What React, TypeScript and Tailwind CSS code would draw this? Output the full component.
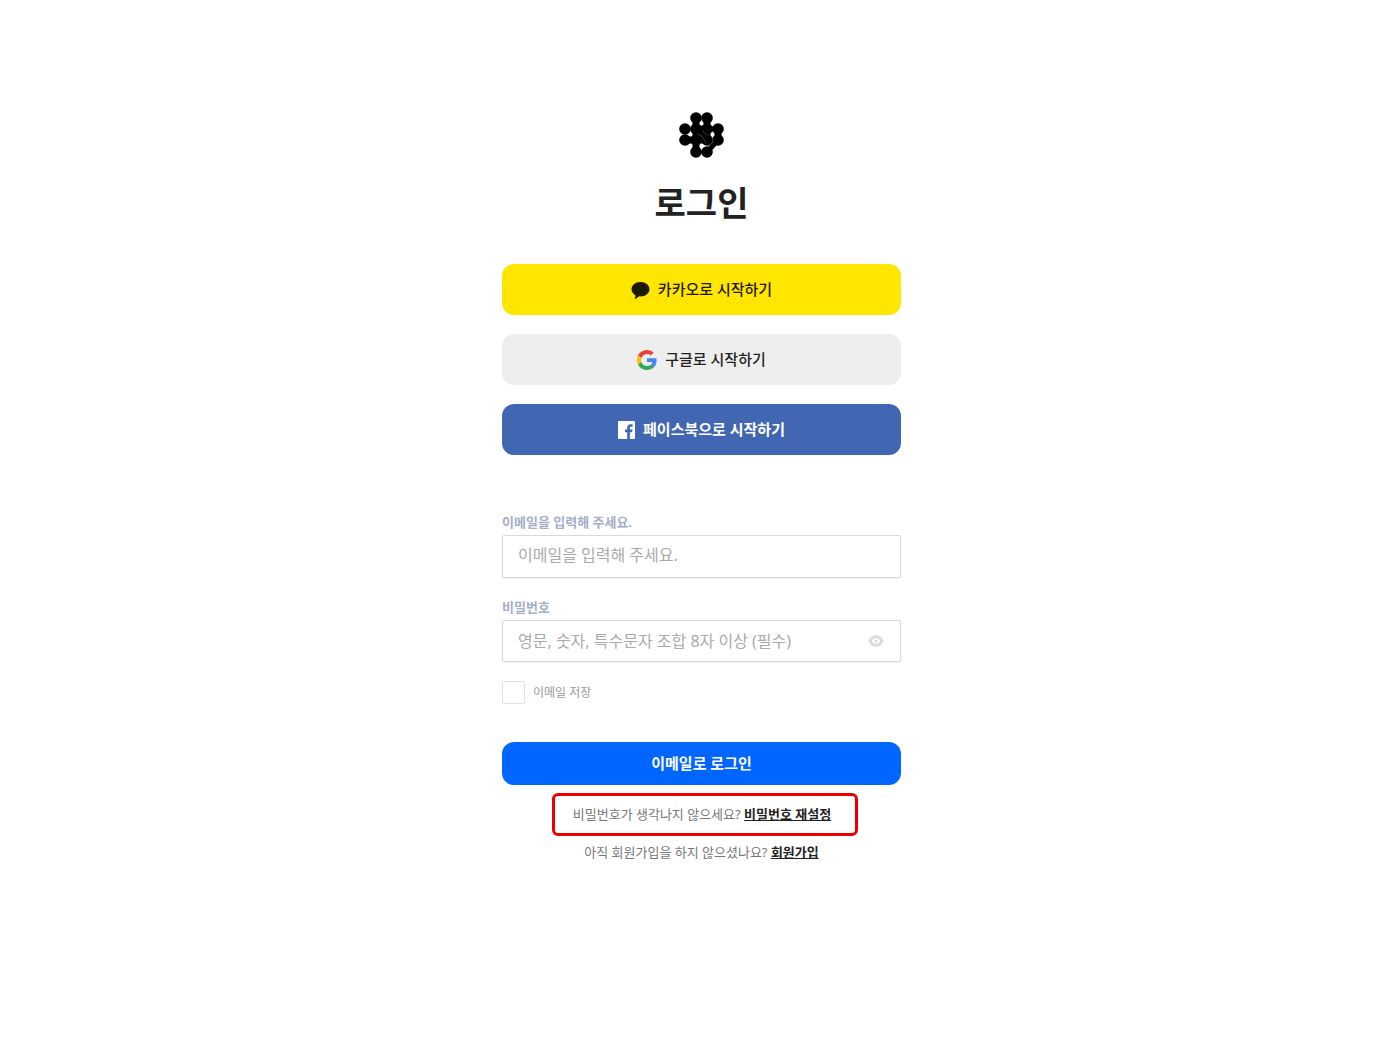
import { useState } from 'react';
import type { ReactNode } from 'react';

function Logo() {
  const dots = [
    [17, 6], [28, 6],
    [6, 17], [17, 17], [28, 17], [39, 17],
    [6, 28], [17, 28], [28, 28], [39, 28],
    [17, 40], [28, 40],
  ];

  return (
    <svg width="46" height="46" viewBox="0 0 46 46" aria-hidden="true">
      <path d="M17 6v11M28 6v11M6 28h11v12M39 17v11M17 17v11h11V17h-11" fill="none" stroke="#000" strokeWidth="7" />
      <path d="M17 17l11 11M28 17h11M28 40l11-12" fill="none" stroke="#000" strokeWidth="5" />
      {dots.map(([cx, cy]) => (
        <circle key={`${cx}-${cy}`} cx={cx} cy={cy} r="5.8" />
      ))}
      <path d="M18 22l5 2 4 7M24 18c1 4 3 5 6 5M28 34c4-1 6-3 6-7" fill="none" stroke="#555" strokeWidth="0.6" />
    </svg>
  );
}

function KakaoIcon() {
  return (
    <svg width="19" height="18" viewBox="0 0 19 18" fill="#1e1a00" aria-hidden="true">
      <path d="M9.500 1C4.400 1 .5 4.200.5 8.200c0 2.600 1.700 4.900 4.200 6.200l-.9 3.200c-.1.300.2.500.5.300l3.900-2.600 1.300.1c5.100 0 9-3.200 9-7.200S14.600 1 9.500 1z" />
    </svg>
  );
}

function GoogleIcon() {
  return (
    <svg width="20" height="20" viewBox="0 0 48 48" aria-hidden="true">
      <path fill="#EA4335" d="M24 9.500c3.540 0 6.710 1.220 9.210 3.600l6.850-6.850C35.900 2.380 30.470 0 24 0 14.620 0 6.510 5.380 2.560 13.220l7.980 6.190C12.430 13.720 17.740 9.500 24 9.500z" />
      <path fill="#4285F4" d="M46.980 24.550c0-1.570-.15-3.090-.38-4.550H24v9.020h12.940c-.58 2.960-2.260 5.480-4.780 7.180l7.730 6c4.510-4.180 7.090-10.360 7.090-17.650z" />
      <path fill="#FBBC05" d="M10.530 28.590c-.48-1.450-.76-2.990-.76-4.590s.27-3.140.76-4.590l-7.980-6.190C.92 16.460 0 20.120 0 24c0 3.880.92 7.540 2.560 10.780l7.970-6.190z" />
      <path fill="#34A853" d="M24 48c6.480 0 11.930-2.130 15.890-5.810l-7.730-6c-2.150 1.450-4.920 2.300-8.160 2.300-6.260 0-11.570-4.220-13.470-9.910l-7.980 6.190C6.510 42.620 14.620 48 24 48z" />
    </svg>
  );
}

function FacebookIcon() {
  return (
    <svg width="17" height="18" viewBox="0 0 17 18" aria-hidden="true">
      <rect width="17" height="18" rx="1" fill="#fff" />
      <path d="M9.200 18v-6.700H7V8.600h2.200V6.700c0-2.300 1.400-3.500 3.400-3.500l2 .1v2.400h-1.400c-1.100 0-1.300.5-1.300 1.300v1.600h2.600l-.4 2.700h-2.200V18z" fill="#4267b2" />
    </svg>
  );
}

function EyeIcon() {
  return (
    <svg width="16" height="14" viewBox="0 0 16 14" fill="none" aria-hidden="true">
      <path d="M2 7c1.500-3 3.500-4.200 6-4.200S12.500 4 14 7c-1.500 3-3.500 4.200-6 4.200S3.500 10 2 7z" stroke="#dcdcdc" strokeWidth="3" strokeLinejoin="round" />
      <circle cx="8" cy="7" r="1.500" fill="#d4d4d4" />
    </svg>
  );
}

function SocialButton({ icon, className, children }: { icon: ReactNode; className: string; children: ReactNode }) {
  return (
    <button
      type="button"
      className={`flex h-[51px] w-full items-center justify-center gap-2 rounded-xl text-[15px] ${className}`}
    >
      {icon}
      <span>{children}</span>
    </button>
  );
}

export default function App() {
  const [showPassword, setShowPassword] = useState(false);

  return (
    <main className="flex min-h-screen justify-center bg-white pt-28 pb-10 pl-[3px] font-['Noto_Sans','Noto_Sans_CJK_KR',sans-serif] text-[#222]">
      <div className="flex w-full max-w-[399px] flex-col items-center">
        <Logo />
        <h1 className="mt-5 text-[34px] leading-[50px] font-bold">로그인</h1>

        <div className="mt-9 flex w-full flex-col gap-[19px]">
          <SocialButton icon={<KakaoIcon />} className="bg-[#ffe600] font-medium text-[#1e1a00]">카카오로 시작하기</SocialButton>
          <SocialButton icon={<GoogleIcon />} className="bg-[#eeeeee] font-medium">구글로 시작하기</SocialButton>
          <SocialButton icon={<FacebookIcon />} className="bg-[#4267b2] font-bold text-white">페이스북으로 시작하기</SocialButton>
        </div>

        <form className="mt-14 w-full" onSubmit={(e) => e.preventDefault()}>
          <label htmlFor="email" className="block pb-0.5 text-[13px] leading-[22px] font-bold text-[#a3aec6]">이메일을 입력해 주세요.</label>
          <input
            id="email"
            type="email"
            placeholder="이메일을 입력해 주세요."
            className="h-[43px] w-full rounded-xs border border-[#d5d9dc] px-[15px] pb-1 text-base shadow-xs outline-none placeholder:text-[#aaa]"
          />

          <label htmlFor="password" className="mt-[18px] block pb-0.5 text-[13px] leading-[22px] font-bold text-[#a3aec6]">비밀번호</label>
          <div className="flex h-[42px] items-center rounded-xs border border-[#d5d9dc] pr-4 pl-[15px] shadow-xs">
            <input
              id="password"
              type={showPassword ? 'text' : 'password'}
              placeholder="영문, 숫자, 특수문자 조합 8자 이상 (필수)"
              className="min-w-0 flex-1 text-base outline-none placeholder:text-[#aaa]"
            />
            <button type="button" aria-label="비밀번호 표시" onClick={() => setShowPassword(!showPassword)}>
              <EyeIcon />
            </button>
          </div>

          <div className="mt-[19px] flex items-center gap-2">
            <input
              id="remember"
              type="checkbox"
              className="size-[23px] appearance-none rounded-xs border border-[#dfe2e4] checked:bg-[#0066ff]"
            />
            <label htmlFor="remember" className="text-xs text-[#999]">이메일 저장</label>
          </div>

          <button type="submit" className="mt-[38px] h-[43px] w-full rounded-xl bg-[#0066ff] text-[15px] font-bold text-white">
            이메일로 로그인
          </button>
        </form>

        <p className="mt-2 ml-[7px] rounded-md border-3 border-[#ea0000] py-[5px] pr-6 pl-[18px] text-[13px] leading-[27px] whitespace-nowrap text-[#777]">
          비밀번호가 생각나지 않으세요?{' '}
          <a href="#reset" className="font-bold text-[#222] underline">비밀번호 재설정</a>
        </p>
        <p className="mt-[3px] text-[13px] leading-[27px] text-[#777]">
          아직 회원가입을 하지 않으셨나요?{' '}
          <a href="#signup" className="font-bold text-[#222] underline">회원가입</a>
        </p>
      </div>
    </main>
  );
}
